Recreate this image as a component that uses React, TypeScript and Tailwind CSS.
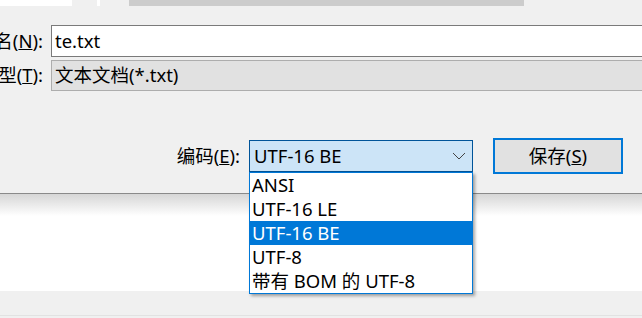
export default function App() {
  const items = ["ANSI", "UTF-16 LE", "UTF-16 BE", "UTF-8", "带有 BOM 的 UTF-8"]
  return (
    <div className="w-[642px] h-[318px] bg-[#f0f0f0] flex flex-col overflow-hidden relative text-[18.5px] leading-none text-black font-['Noto_Sans','Noto_Sans_CJK_SC',sans-serif]">
      {/* top strip */}
      <div className="flex h-[6px] shrink-0">
        <div className="w-[72px] bg-white" />
        <div className="w-[25px]" />
        <div className="w-[3px] bg-white" />
        <div className="w-[29px]" />
        <div className="w-[395px] bg-[#cccccc]" />
      </div>

      <div className="mt-[19px] flex flex-col gap-[3px] shrink-0">
        <div className="flex items-center h-[32px]">
          <div className="w-[43px] flex justify-end whitespace-nowrap shrink-0">
            文件名(<u>N</u>):
          </div>
          <div className="ml-[8px] w-[640px] shrink-0 h-full bg-white border border-[#7a7a7a] flex items-center pl-[3px]">
            te.txt
          </div>
        </div>
        <div className="flex items-center h-[31px]">
          <div className="w-[43px] flex justify-end whitespace-nowrap shrink-0">
            保存类型(<u>T</u>):
          </div>
          <div className="ml-[8px] w-[640px] shrink-0 h-full bg-[#e1e1e1] border border-[#adadad] flex items-center pl-[3px]">
            文本文档(*.txt)
          </div>
        </div>
      </div>

      <div className="mt-[47px] flex items-center h-[36px] shrink-0">
        <div className="w-[240px] text-right whitespace-nowrap shrink-0">
          编码(<u>E</u>):
        </div>
        <div className="ml-[9px] w-[224px] h-[32px] relative shrink-0 z-10">
          <div className="h-full bg-[#cce4f7] border border-[#005499] flex items-center justify-between pl-[4px] pr-[5px]">
            <span>UTF-16 BE</span>
            <svg width="14" height="8" viewBox="0 0 14 8" className="mr-[1px]">
              <polyline points="1,1 7,7 13,1" fill="none" stroke="#444" strokeWidth="1" />
            </svg>
          </div>
          <div className="absolute top-full left-0 w-full bg-white border border-[#0078d7] shadow-[2px_2px_3px_rgba(0,0,0,0.35)]">
            {items.map((t) => (
              <div
                key={t}
                className={
                  t === "UTF-16 BE"
                    ? "h-[24px] flex items-center pl-[2px] bg-[#0078d7] text-white whitespace-nowrap"
                    : "h-[24px] flex items-center pl-[2px] whitespace-nowrap"
                }
              >
                {t}
              </div>
            ))}
          </div>
        </div>
        <div className="ml-[20px] w-[130px] h-[36px] shrink-0 border-2 border-[#0078d7] bg-[#e1e1e1] flex items-center justify-center">
          保存(<u>S</u>)
        </div>
      </div>

      <div className="mt-[19px] h-px bg-[#8a8a8a] shrink-0" />
      <div className="h-[97px] shrink-0 bg-[linear-gradient(to_bottom,#d6d6d6,#ffffff_22px)]" />
      <div className="h-[24px] shrink-0 bg-[#f0f0f0]" />
      <div className="h-px shrink-0 bg-[#e2e2e2]" />
      <div className="flex-1 bg-[#f0f0f0]" />
    </div>
  )
}
